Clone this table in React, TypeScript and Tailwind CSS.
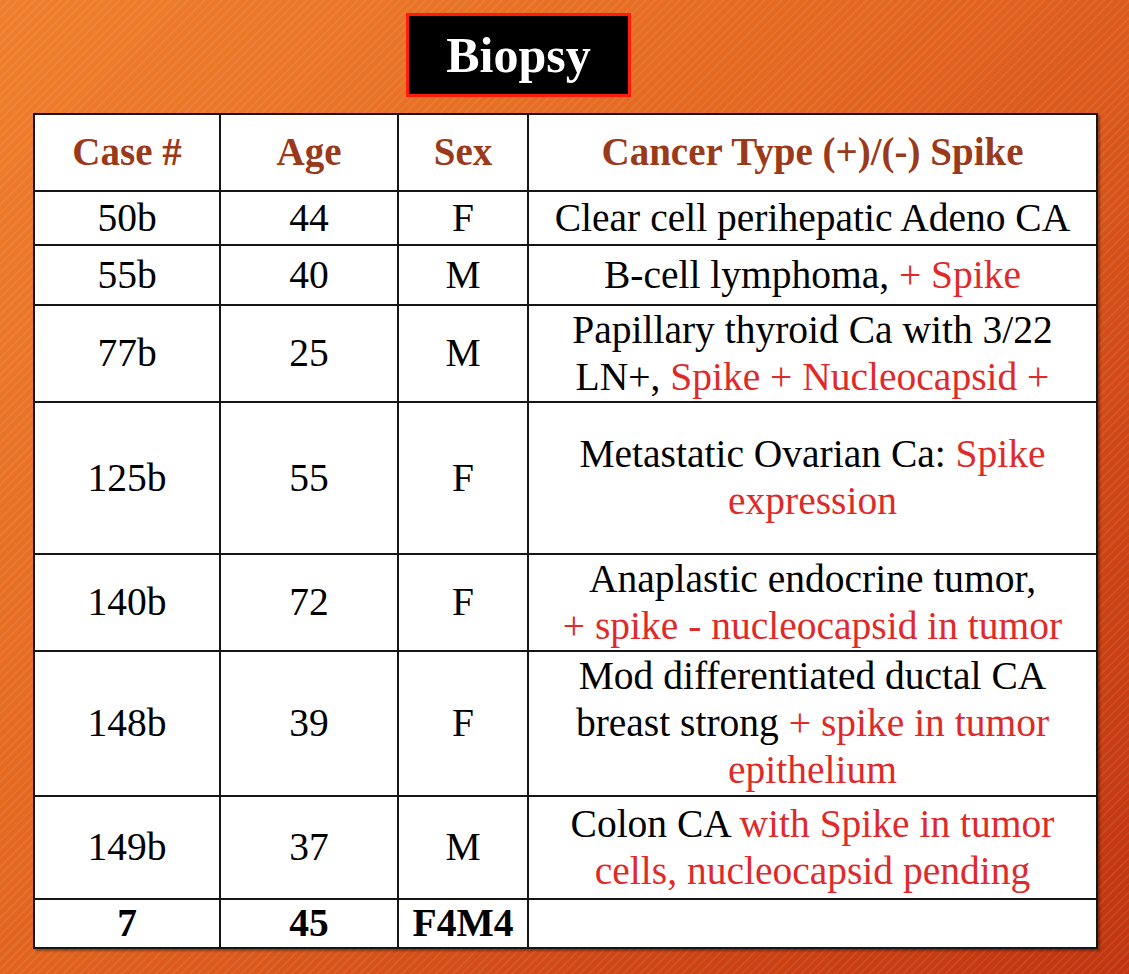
const red = "text-[#e02a2a]";

const rows: { c: string; a: string; s: string; h: number; t: React.ReactNode }[] = [
  { c: "50b", a: "44", s: "F", h: 54, t: <>Clear cell perihepatic Adeno CA</> },
  {
    c: "55b",
    a: "40",
    s: "M",
    h: 60,
    t: (
      <>
        B-cell lymphoma, <span className={red}>+ Spike</span>
      </>
    ),
  },
  {
    c: "77b",
    a: "25",
    s: "M",
    h: 97,
    t: (
      <>
        Papillary thyroid Ca with 3/22
        <br />
        LN+, <span className={red}>Spike + Nucleocapsid +</span>
      </>
    ),
  },
  {
    c: "125b",
    a: "55",
    s: "F",
    h: 152,
    t: (
      <>
        Metastatic Ovarian Ca: <span className={red}>Spike</span>
        <br />
        <span className={red}>expression</span>
      </>
    ),
  },
  {
    c: "140b",
    a: "72",
    s: "F",
    h: 97,
    t: (
      <>
        Anaplastic endocrine tumor,
        <br />
        <span className={red}>+ spike - nucleocapsid in tumor</span>
      </>
    ),
  },
  {
    c: "148b",
    a: "39",
    s: "F",
    h: 145,
    t: (
      <>
        Mod differentiated ductal CA
        <br />
        breast strong <span className={red}>+ spike in tumor</span>
        <br />
        <span className={red}>epithelium</span>
      </>
    ),
  },
  {
    c: "149b",
    a: "37",
    s: "M",
    h: 103,
    t: (
      <>
        Colon CA <span className={red}>with Spike in tumor</span>
        <br />
        <span className={red}>cells, nucleocapsid pending</span>
      </>
    ),
  },
];

const cell = "border-2 border-[#161616] text-center align-middle";

export default function App() {
  return (
    <div
      className="h-[974px] w-full overflow-hidden bg-[repeating-linear-gradient(135deg,rgba(255,255,255,0.07)_0px,rgba(255,255,255,0.07)_2px,transparent_2px,transparent_6px),linear-gradient(135deg,#ef7f2c_0%,#e2651f_45%,#cf4616_75%,#c0340f_100%)] pt-[13px] text-black"
      style={{ fontFamily: '"Liberation Serif", "Times New Roman", serif' }}
    >
      <div className="ml-[406px] flex h-[84px] w-[225px] items-center justify-center border-[3px] border-[#ff1c0c] bg-black">
        <span className="text-[50px] font-bold leading-none text-white">Biopsy</span>
      </div>
      <table className="ml-[33px] mt-[16px] w-[1063px] table-fixed border-collapse bg-white shadow-[2px_2px_2px_rgba(0,0,0,0.35)]">
        <colgroup>
          <col className="w-[186px]" />
          <col className="w-[178px]" />
          <col className="w-[130px]" />
          <col className="w-[569px]" />
        </colgroup>
        <thead>
          <tr className="h-[77px] text-[39px] font-bold text-[#9b3a1b]">
            <th className={cell}>Case #</th>
            <th className={cell}>Age</th>
            <th className={cell}>Sex</th>
            <th className={cell}>Cancer Type (+)/(-) Spike</th>
          </tr>
        </thead>
        <tbody className="text-[39.5px] leading-[47px]">
          {rows.map((r) => (
            <tr key={r.c} style={{ height: r.h }}>
              <td className={cell}>{r.c}</td>
              <td className={cell}>{r.a}</td>
              <td className={cell}>{r.s}</td>
              <td className={`${cell} whitespace-nowrap`}>{r.t}</td>
            </tr>
          ))}
          <tr className="h-[48px] font-bold">
            <td className={cell}>7</td>
            <td className={cell}>45</td>
            <td className={cell}>F4M4</td>
            <td className={cell}></td>
          </tr>
        </tbody>
      </table>
    </div>
  );
}
